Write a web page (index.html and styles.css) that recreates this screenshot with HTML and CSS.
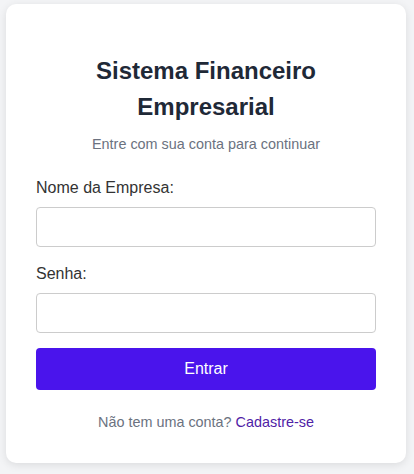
FILE: index.html
```html
<!DOCTYPE html>
<html lang="pt-BR">
<head>
    <meta charset="UTF-8">
    <meta name="viewport" content="width=device-width, initial-scale=1.0">
    <title>Login - Sistema Financeiro Empresarial</title>
    <link rel="stylesheet" href="styles.css">
</head>
<body>
    <div class="login-container">
        <div class="login-header">
            <h1>Sistema Financeiro Empresarial</h1>
            <p>Entre com sua conta para continuar</p>
        </div>

        <form id="loginForm" method="POST">
            <div class="form-group">
                <label for="empresa">Nome da Empresa:</label>
                <input type="text" id="empresa" name="empresa" required>
            </div>

            <div class="form-group">
                <label for="senha">Senha:</label>
                <input type="password" id="senha" name="senha" required>
            </div>

            <button type="submit" class="submit-btn">Entrar</button>
        </form>

        <div class="register-link">
            Não tem uma conta? <a href="#">Cadastre-se</a>
        </div>
    </div>
</body>
</html>
```

FILE: styles.css
```css
* {
    margin: 0;
    padding: 0;
    box-sizing: border-box;
}

body {
    font-family: 'Liberation Sans', Arial, sans-serif;
    background: #f3f4f6;
    min-height: 100vh;
    padding: 4px 8px 12px 6px;
}

.login-container {
    width: 400px;
    background: #fff;
    padding: 49px 30px 30px;
    border-radius: 10px;
    box-shadow: 0 2px 8px rgba(0,0,0,0.1);
}

.login-header {
    text-align: center;
    margin-bottom: 21px;
}

.login-header h1 {
    color: #1f2937;
    font-size: 24px;
    line-height: 36px;
    font-weight: 700;
}

.login-header p {
    color: #6b7280;
    font-size: 14.4px;
    line-height: 22px;
    margin-top: 8px;
}

.form-group {
    margin-bottom: 15px;
}

.form-group label {
    display: block;
    color: #333;
    font-size: 16px;
    line-height: 24px;
    margin-bottom: 7px;
}

.form-group input {
    width: 100%;
    height: 40px;
    padding: 8px 10px;
    border: 1px solid #ccc;
    border-radius: 4px;
    font-size: 16px;
    background: #fff;
}

.submit-btn {
    display: block;
    width: 100%;
    height: 42px;
    background: #4a14ec;
    color: #fff;
    border: none;
    border-radius: 4px;
    font-family: inherit;
    font-size: 16px;
    cursor: pointer;
}

.register-link {
    text-align: center;
    margin-top: 21px;
    color: #6b7280;
    font-size: 14.4px;
    line-height: 22px;
}

.register-link a {
    color: #4f22a6;
    text-decoration: none;
}
```
